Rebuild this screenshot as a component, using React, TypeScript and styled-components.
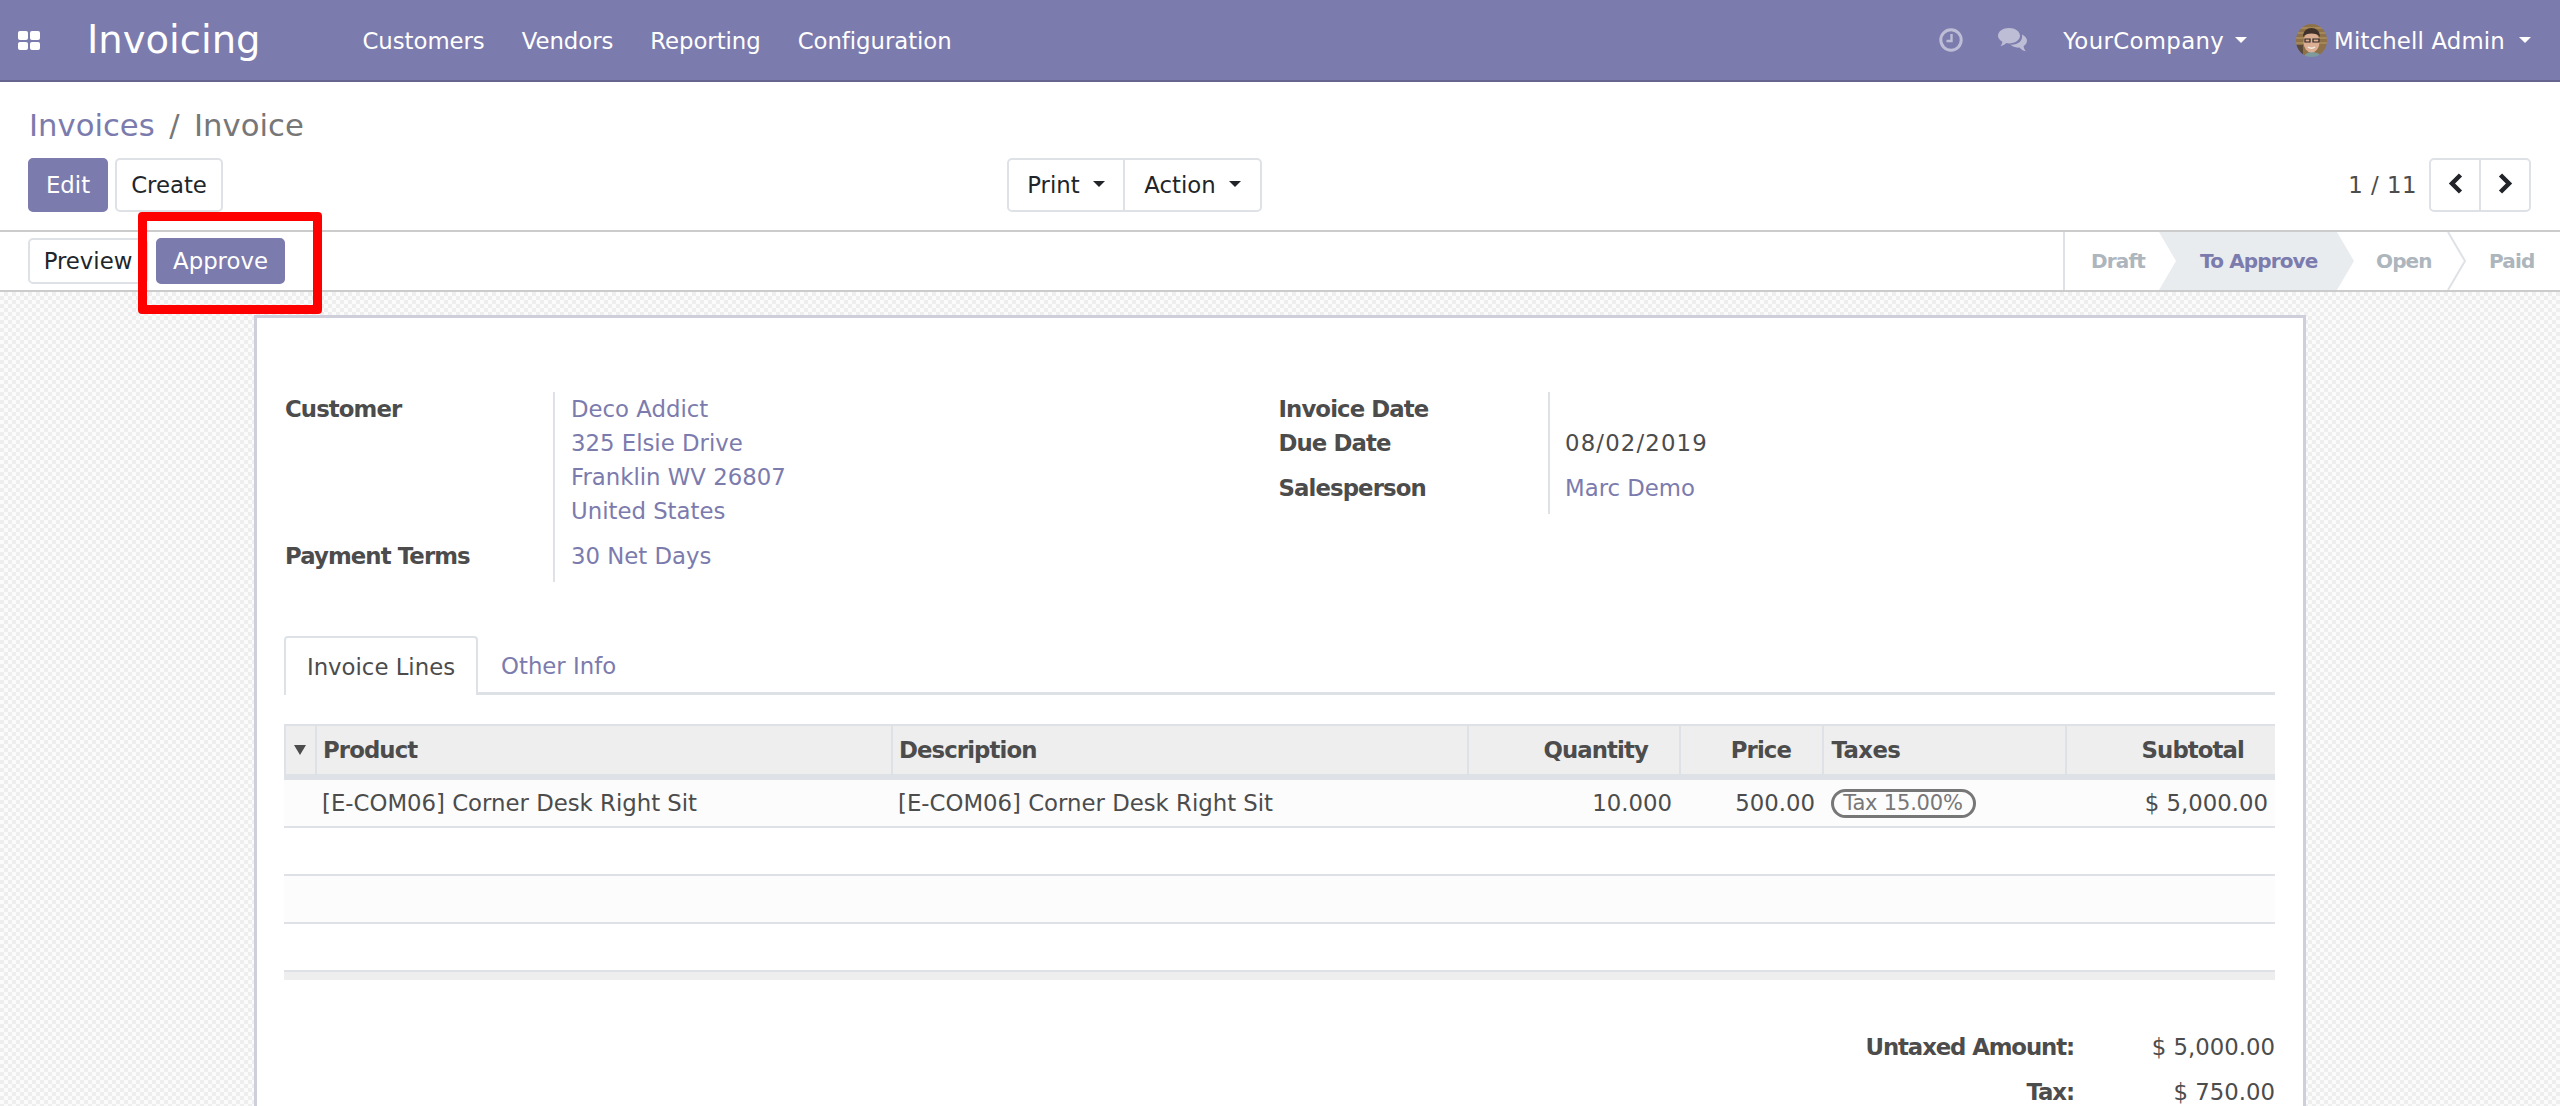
import React from 'react';
import styled, { createGlobalStyle } from 'styled-components';

const GlobalStyle = createGlobalStyle`
  html, body { margin: 0; padding: 0; height: 100%; overflow: hidden; background: #fff; }
  #root { height: 100%; }
  * { box-sizing: border-box; }
  body { font-family: "DejaVu Sans", "Open Sans", sans-serif; color: #4c4c4c; }
`;

const purple = '#7c7bad';
const line = '#dee2e6';

const Page = styled.div`
  width: 2560px;
  height: 1106px;
  display: flex;
  flex-direction: column;
  overflow: hidden;
`;

const NavBar = styled.header`
  height: 82px;
  flex: none;
  display: flex;
  align-items: center;
  background: ${purple};
  border-bottom: 2px solid #66658f;
  color: #fff;
  padding: 0 29px 0 18px;
`;
const Brand = styled.div`
  font-size: 38.5px;
  line-height: 1;
  width: 275.5px;
  margin-left: 47px;
  margin-top: 1px;
`;
const Menu = styled.nav`
  display: flex;
  gap: 37px;
`;
const MenuItem = styled.span`
  font-size: 22.8px;
  letter-spacing: -0.05px;
  margin-top: 2px;
`;
const NavRight = styled.div`
  margin-left: auto;
  display: flex;
  align-items: center;
`;
const NavIcon = styled.svg`
  display: block;
  flex: none;
`;
const NavCaret = styled.i`
  width: 0;
  height: 0;
  margin-left: 14px;
  border-top: 6px solid #fff;
  border-left: 6.5px solid transparent;
  border-right: 6.5px solid transparent;
`;
const CompanyCaret = styled(NavCaret)`
  margin-left: 11px;
`;
const CompanyName = styled(MenuItem)`
  margin-left: 36px;
  letter-spacing: 0.35px;
`;
const UserName = styled(MenuItem)`
  margin-left: 7px;
  letter-spacing: 0.17px;
`;
const Avatar = styled.svg`
  display: block;
  margin-left: 49px;
  flex: none;
  border-radius: 50%;
`;

const ControlPanel = styled.section`
  flex: none;
  height: 148px;
  padding: 19px 29px 0 28px;
  display: flex;
  flex-direction: column;
`;
const Breadcrumb = styled.div`
  font-size: 30.7px;
  line-height: 49px;
  padding-left: 1px;
  display: flex;
  color: #777;
`;
const CrumbLink = styled.span`
  color: ${purple};
`;
const CrumbSep = styled.span`
  margin: 0 14.5px;
`;
const ButtonRow = styled.div`
  margin-top: 8px;
  display: grid;
  grid-template-columns: 979px 1fr auto;
  align-items: start;
`;
const ButtonGroup = styled.div`
  display: flex;
  gap: 7px;
`;
const Btn = styled.button<{ $primary?: boolean; $h?: number; $w: number }>`
  height: ${p => p.$h ?? 54}px;
  width: ${p => p.$w}px;
  padding: 0;
  font: inherit;
  font-size: 22.8px;
  border-radius: 5px;
  border: 2px solid ${p => (p.$primary ? purple : line)};
  background: ${p => (p.$primary ? purple : '#fff')};
  color: ${p => (p.$primary ? '#fff' : '#212529')};
  display: flex;
  align-items: center;
  justify-content: center;
`;
const Joined = styled.div`
  display: inline-flex;
  height: 54px;
  border: 2px solid ${line};
  border-radius: 5px;
  justify-self: start;
`;
const JoinedItem = styled.span<{ $w: number }>`
  width: ${p => p.$w}px;
  display: flex;
  align-items: center;
  justify-content: center;
  gap: 13px;
  font-size: 22.8px;
  color: #212529;
  & + & {
    border-left: 2px solid ${line};
  }
`;
const SmallCaret = styled.i`
  width: 0;
  height: 0;
  margin-top: -3px;
  border-top: 6px solid #212529;
  border-left: 6.5px solid transparent;
  border-right: 6.5px solid transparent;
`;
const Pager = styled.div`
  display: flex;
  align-items: center;
  gap: 12px;
`;
const PagerText = styled.span`
  font-size: 22.8px;
  letter-spacing: 0.5px;
  color: #4c4c4c;
`;
const Chevron = styled.svg`
  display: block;
`;

const StatusRow = styled.section`
  flex: none;
  height: 62px;
  border-top: 2px solid #ccc;
  border-bottom: 2px solid #ccc;
  display: flex;
  justify-content: space-between;
  padding-left: 28px;
  position: relative;
`;
const StatusButtons = styled.div`
  display: flex;
  align-items: center;
  gap: 8px;
`;
const Steps = styled.div`
  display: flex;
  border-left: 2px solid ${line};
`;
const Step = styled.div<{ $w: number; $pad: number; $active?: boolean }>`
  width: ${p => p.$w}px;
  padding-left: ${p => p.$pad}px;
  position: relative;
  display: flex;
  align-items: center;
  font-size: 20px;
  font-weight: 700;
  letter-spacing: -0.85px;
  color: ${p => (p.$active ? purple : '#adb5bd')};
  ${p =>
    p.$active
      ? `
  &::before {
    content: '';
    position: absolute;
    inset: 0 -17px 0 0;
    background: #e9ecef;
    clip-path: polygon(0 0, calc(100% - 17px) 0, 100% 50%, calc(100% - 17px) 100%, 0 100%, 17px 50%);
  }`
      : ''}
`;
const StepText = styled.span`
  position: relative;
`;
const StepChevron = styled.svg`
  position: absolute;
  left: 100%;
  top: 0;
  display: block;
`;
const Marker = styled.div`
  position: absolute;
  left: 138px;
  top: -20px;
  width: 184px;
  height: 102px;
  border: 9px solid #ff0000;
  border-radius: 4px;
  z-index: 3;
`;

const Content = styled.main`
  flex: 1;
  min-height: 0;
  padding: 23px 254px 0;
  background-color: #f7f7f7;
  background-image: conic-gradient(#eeeeee 25%, #fbfbfb 0 50%, #eeeeee 0 75%, #fbfbfb 0);
  background-size: 8px 8px;
`;
const Sheet = styled.article`
  width: 2052px;
  height: 100%;
  background: #fff;
  border: 3px solid #cfcfdc;
  border-bottom: 0;
  padding: 74px 28px 0 27px;
`;
const FieldColumns = styled.div`
  display: grid;
  grid-template-columns: 993.5px 1fr;
  align-items: start;
`;
const FieldGrid = styled.div<{ $labelW: number }>`
  display: grid;
  grid-template-columns: ${p => p.$labelW}px auto;
  justify-content: start;
  font-size: 22.8px;
  line-height: 34px;
`;
const Label = styled.div`
  font-weight: 700;
  letter-spacing: -0.9px;
  border-right: 2px solid ${line};
  padding-left: 1px;
`;
const Value = styled.div<{ $pad?: number }>`
  padding-left: 16px;
  padding-bottom: ${p => p.$pad ?? 0}px;
`;
const DateValue = styled(Value)`
  padding-left: 15px;
  letter-spacing: 1.15px;
`;
const LinkLine = styled.div`
  color: ${purple};
`;
const LinkValue = styled(Value)`
  padding-left: 15px;
  color: ${purple};
`;

const Tabs = styled.div`
  margin-top: 54px;
  height: 59px;
  display: flex;
  border-bottom: 3px solid ${line};
`;
const Tab = styled.div<{ $active?: boolean }>`
  width: ${p => (p.$active ? '194px' : 'auto')};
  height: 59px;
  display: flex;
  align-items: center;
  justify-content: center;
  font-size: 22.8px;
  padding: ${p => (p.$active ? '0' : '0 23px')};
  color: ${p => (p.$active ? '#4c4c4c' : purple)};
  background: ${p => (p.$active ? '#fff' : 'transparent')};
  border-radius: 4px 4px 0 0;
  ${p => (p.$active ? `border: 2px solid ${line}; border-bottom: 0;` : '')}
`;

const LinesTable = styled.table`
  margin-top: 29px;
  width: 1991px;
  table-layout: fixed;
  border-collapse: separate;
  border-spacing: 0;
  font-size: 22.8px;
`;
const Th = styled.th<{ $right?: boolean }>`
  height: 56px;
  padding: 0 ${p => (p.$right ? '31px' : '5px')} 0 ${p => (p.$right ? '0' : '6px')};
  background: #eee;
  border-top: 2px solid ${line};
  border-bottom: 6px solid ${line};
  border-left: 2px solid ${line};
  text-align: ${p => (p.$right ? 'right' : 'left')};
  font-weight: 700;
  letter-spacing: -0.9px;
  color: #4c4c4c;
`;
const TaxesTh = styled(Th)`
  padding-left: 7.5px;
  letter-spacing: -0.6px;
`;
const SortCaret = styled.i`
  display: block;
  width: 0;
  height: 0;
  margin-left: 2px;
  border-top: 10px solid #4c4c4c;
  border-left: 6.5px solid transparent;
  border-right: 6.5px solid transparent;
`;
const Row = styled.tr<{ $alt?: boolean }>`
  background: ${p => (p.$alt ? '#fcfcfc' : '#fff')};
`;
const Td = styled.td<{ $right?: boolean }>`
  height: 48px;
  padding: 0 7px;
  border-bottom: 2px solid ${line};
  text-align: ${p => (p.$right ? 'right' : 'left')};
`;
const FootCell = styled.td`
  height: 8px;
  padding: 0;
  background: #eee;
`;
const Tag = styled.span`
  display: inline-block;
  width: 145px;
  height: 29px;
  margin-left: 1.5px;
  line-height: 23px;
  border: 3px solid #777;
  border-radius: 15px;
  font-size: 21px;
  letter-spacing: -0.2px;
  color: #777;
  text-align: center;
  vertical-align: middle;
`;
const Totals = styled.div`
  margin-top: 45px;
  display: grid;
  grid-template-columns: auto 201px;
  justify-content: end;
  font-size: 22.8px;
  line-height: 45px;
`;
const TotalLabel = styled.div`
  font-weight: 700;
  letter-spacing: -1.1px;
  text-align: right;
`;
const TotalValue = styled.div`
  text-align: right;
`;

const GridIcon = () => (
  <NavIcon width="22" height="19" viewBox="0 0 22 19" fill="#fff">
    <rect x="0" y="0" width="10" height="9" rx="2" />
    <rect x="12" y="0" width="10" height="9" rx="2" />
    <rect x="0" y="11" width="10" height="8" rx="2" />
    <rect x="12" y="11" width="10" height="8" rx="2" />
  </NavIcon>
);
const ClockIcon = () => (
  <NavIcon width="24" height="24" viewBox="0 0 24 24" fill="none" stroke="#fff" strokeOpacity="0.5">
    <circle cx="12" cy="12" r="10.200" strokeWidth="3" />
    <path d="M12.500 6v7H7.500" strokeWidth="2.400" />
  </NavIcon>
);
const ChatIcon = () => (
  <NavIcon width="29" height="24" viewBox="0 0 29 24" fill="#fff" fillOpacity="0.5">
    <path d="M11 0c6 0 11 3.400 11 7.700s-5 7.700-11 7.700c-1 0-1.900-.1-2.800-.3C6.600 16.700 4.500 18 2.500 18c.9-1 1.600-2.300 1.900-4.300C1.700 12.300 0 10.100 0 7.700 0 3.400 5 0 11 0z" />
    <path d="M24 6.500c3 1.400 5 3.700 5 6.300 0 2.100-1.300 4-3.400 5.300.2 2 .9 3.700 2.200 5.200-2.500-.4-4.800-1.900-6.300-3.700-3.600.4-7-.8-9.200-3 7.500.5 12.900-3.400 11.700-10.100z" />
  </NavIcon>
);
const AvatarPic = () => (
  <Avatar width="31" height="33" viewBox="0 0 31 33">
    <defs>
      <filter id="avatarSoft">
        <feGaussianBlur stdDeviation="0.6" />
      </filter>
    </defs>
    <g filter="url(#avatarSoft)">
      <rect x="-2" y="-2" width="35" height="37" fill="#8f7148" />
      <path d="M0 4h31M0 9h31M0 14h31M0 19h31" stroke="#ab8e5c" strokeWidth="1.500" />
      <rect x="-2" y="21" width="9" height="14" fill="#5a4a38" />
      <path d="M8 35c0-5 3-7 8-7s9 2 10 7z" fill="#7d9a9c" />
      <ellipse cx="15.500" cy="18" rx="8" ry="10.500" fill="#dcae93" />
      <path d="M7 13c0-6 4-9 8.500-9S24 7 24 13c-2-3-5-3.500-8.500-3.500S9 10 7 13z" fill="#3f3029" />
      <path d="M9 15h5v3H9zM17 15h6v3h-6z" fill="none" stroke="#2c2420" strokeWidth="1.200" />
      <path d="M12 23c2 1.500 5 1.500 7 0" stroke="#f5efe8" strokeWidth="1.500" fill="none" />
    </g>
  </Avatar>
);
const PagerChevron = ({ dir }: { dir: 'l' | 'r' }) => (
  <Chevron width="15" height="21" viewBox="0 0 15 21" fill="none" stroke="#212529" strokeWidth="4.500">
    <path d={dir === 'l' ? 'M12.500 2 4 10.500 12.500 19' : 'M2.500 2 11 10.500 2.500 19'} />
  </Chevron>
);

const PagerBox = styled.div`
  display: flex;
  height: 54px;
  border: 2px solid ${line};
  border-radius: 5px;
`;
const PagerBtn = styled.span<{ $w: number }>`
  width: ${p => p.$w}px;
  display: flex;
  align-items: center;
  justify-content: center;
  padding-bottom: 4px;
  & + & {
    border-left: 2px solid ${line};
  }
`;
const ChatIconWrap = styled.span`
  display: block;
  margin-left: 35px;
`;

export default function App() {
  return (
    <Page>
      <GlobalStyle />
      <NavBar>
        <GridIcon />
        <Brand>Invoicing</Brand>
        <Menu>
          <MenuItem>Customers</MenuItem>
          <MenuItem>Vendors</MenuItem>
          <MenuItem>Reporting</MenuItem>
          <MenuItem>Configuration</MenuItem>
        </Menu>
        <NavRight>
          <ClockIcon />
          <ChatIconWrap>
            <ChatIcon />
          </ChatIconWrap>
          <CompanyName>YourCompany</CompanyName>
          <CompanyCaret />
          <AvatarPic />
          <UserName>Mitchell Admin</UserName>
          <NavCaret />
        </NavRight>
      </NavBar>

      <ControlPanel>
        <Breadcrumb>
          <CrumbLink>Invoices</CrumbLink>
          <CrumbSep>/</CrumbSep>
          <span>Invoice</span>
        </Breadcrumb>
        <ButtonRow>
          <ButtonGroup>
            <Btn $primary $w={80}>Edit</Btn>
            <Btn $w={108}>Create</Btn>
          </ButtonGroup>
          <Joined>
            <JoinedItem $w={114}>Print <SmallCaret /></JoinedItem>
            <JoinedItem $w={137}>Action <SmallCaret /></JoinedItem>
          </Joined>
          <Pager>
            <PagerText>1 / 11</PagerText>
            <PagerBox>
              <PagerBtn $w={48}><PagerChevron dir="l" /></PagerBtn>
              <PagerBtn $w={50}><PagerChevron dir="r" /></PagerBtn>
            </PagerBox>
          </Pager>
        </ButtonRow>
      </ControlPanel>

      <StatusRow>
        <StatusButtons>
          <Btn $w={120} $h={46}>Preview</Btn>
          <Btn $primary $w={129} $h={46}>Approve</Btn>
        </StatusButtons>
        <Steps>
          <Step $w={94} $pad={26}><StepText>Draft</StepText></Step>
          <Step $w={178} $pad={41} $active><StepText>To Approve</StepText></Step>
          <Step $w={110} $pad={39}>
            <StepText>Open</StepText>
            <StepChevron width="19" height="58" viewBox="0 0 19 58" fill="none" stroke={line} strokeWidth="2">
              <path d="M1 0l17 29L1 58" />
            </StepChevron>
          </Step>
          <Step $w={113} $pad={42}><StepText>Paid</StepText></Step>
        </Steps>
        <Marker />
      </StatusRow>

      <Content>
        <Sheet>
          <FieldColumns>
            <FieldGrid $labelW={271}>
              <Label>Customer</Label>
              <Value $pad={11}>
                <LinkLine>Deco Addict</LinkLine>
                <LinkLine>325 Elsie Drive</LinkLine>
                <LinkLine>Franklin WV 26807</LinkLine>
                <LinkLine>United States</LinkLine>
              </Value>
              <Label>Payment Terms</Label>
              <Value $pad={9}><LinkLine>30 Net Days</LinkLine></Value>
            </FieldGrid>
            <FieldGrid $labelW={272.5}>
              <Label>Invoice Date</Label>
              <Value />
              <Label>Due Date</Label>
              <DateValue $pad={11}>08/02/2019</DateValue>
              <Label>Salesperson</Label>
              <LinkValue $pad={9}>Marc Demo</LinkValue>
            </FieldGrid>
          </FieldColumns>

          <Tabs>
            <Tab $active>Invoice Lines</Tab>
            <Tab>Other Info</Tab>
          </Tabs>

          <LinesTable>
            <colgroup>
              <col width="31" />
              <col width="576" />
              <col width="576" />
              <col width="212" />
              <col width="143" />
              <col width="243" />
              <col width="210" />
            </colgroup>
            <thead>
              <tr>
                <Th><SortCaret /></Th>
                <Th>Product</Th>
                <Th>Description</Th>
                <Th $right>Quantity</Th>
                <Th $right>Price</Th>
                <TaxesTh>Taxes</TaxesTh>
                <Th $right>Subtotal</Th>
              </tr>
            </thead>
            <tbody>
              <Row $alt>
                <Td />
                <Td>[E-COM06] Corner Desk Right Sit</Td>
                <Td>[E-COM06] Corner Desk Right Sit</Td>
                <Td $right>10.000</Td>
                <Td $right>500.00</Td>
                <Td><Tag>Tax 15.00%</Tag></Td>
                <Td $right>$ 5,000.00</Td>
              </Row>
              {[false, true, false].map((alt, i) => (
                <Row key={i} $alt={alt}>
                  <Td colSpan={7} />
                </Row>
              ))}
            </tbody>
            <tfoot>
              <tr>
                <FootCell colSpan={7} />
              </tr>
            </tfoot>
          </LinesTable>

          <Totals>
            <TotalLabel>Untaxed Amount:</TotalLabel>
            <TotalValue>$ 5,000.00</TotalValue>
            <TotalLabel>Tax:</TotalLabel>
            <TotalValue>$ 750.00</TotalValue>
          </Totals>
        </Sheet>
      </Content>
    </Page>
  );
}
